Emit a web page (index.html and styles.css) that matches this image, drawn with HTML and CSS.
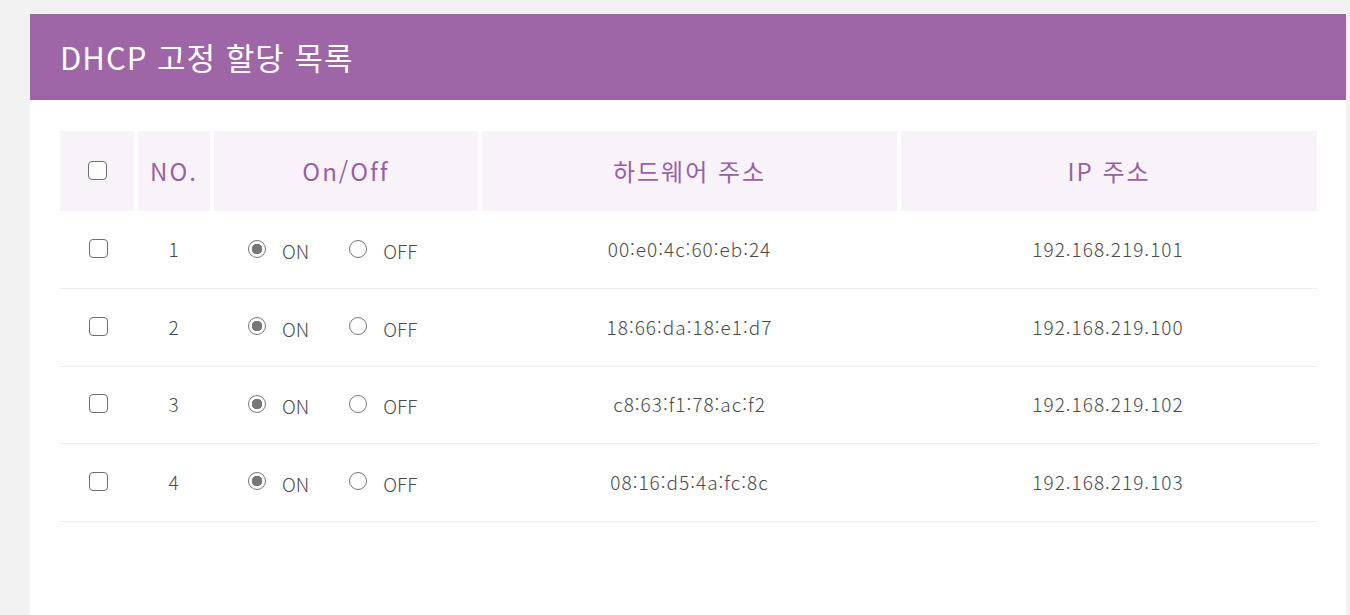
FILE: index.html
```html
<!DOCTYPE html>
<html lang="ko">
<head>
<meta charset="utf-8">
<link rel="stylesheet" href="styles.css">
</head>
<body>
<div class="page">
  <section class="card">
    <header class="card-head"><h1 class="title">DHCP 고정 할당 목록</h1></header>
    <div class="card-body">
      <table class="list">
        <colgroup>
          <col class="c-chk"><col class="c-no"><col class="c-onoff"><col class="c-mac"><col class="c-ip">
        </colgroup>
        <thead>
          <tr>
            <th><input type="checkbox" class="chk"></th>
            <th>NO.</th>
            <th>On/Off</th>
            <th>하드웨어 주소</th>
            <th>IP 주소</th>
          </tr>
        </thead>
        <tbody>
          <tr>
            <td><input type="checkbox" class="chk"></td>
            <td>1</td>
            <td><div class="onoff"><label class="opt"><input type="radio" class="rad" name="r1" checked><span>ON</span></label><label class="opt"><input type="radio" class="rad" name="r1"><span>OFF</span></label></div></td>
            <td>00:e0:4c:60:eb:24</td>
            <td>192.168.219.101</td>
          </tr>
          <tr>
            <td><input type="checkbox" class="chk"></td>
            <td>2</td>
            <td><div class="onoff"><label class="opt"><input type="radio" class="rad" name="r2" checked><span>ON</span></label><label class="opt"><input type="radio" class="rad" name="r2"><span>OFF</span></label></div></td>
            <td>18:66:da:18:e1:d7</td>
            <td>192.168.219.100</td>
          </tr>
          <tr>
            <td><input type="checkbox" class="chk"></td>
            <td>3</td>
            <td><div class="onoff"><label class="opt"><input type="radio" class="rad" name="r3" checked><span>ON</span></label><label class="opt"><input type="radio" class="rad" name="r3"><span>OFF</span></label></div></td>
            <td>c8:63:f1:78:ac:f2</td>
            <td>192.168.219.102</td>
          </tr>
          <tr>
            <td><input type="checkbox" class="chk"></td>
            <td>4</td>
            <td><div class="onoff"><label class="opt"><input type="radio" class="rad" name="r4" checked><span>ON</span></label><label class="opt"><input type="radio" class="rad" name="r4"><span>OFF</span></label></div></td>
            <td>08:16:d5:4a:fc:8c</td>
            <td>192.168.219.103</td>
          </tr>
        </tbody>
      </table>
    </div>
  </section>
</div>
</body>
</html>
```

FILE: styles.css
```css
* { box-sizing: border-box; }
html, body { margin: 0; padding: 0; height: 100%; }
body {
  background: #f2f2f2;
  font-family: "Noto Sans CJK KR", "Noto Sans", sans-serif;
  overflow: hidden;
}
.page {
  padding: 14px 4px 0 30px;
  height: 100%;
}
.card {
  background: #fff;
  min-height: 700px;
}
.card-head {
  background: #9e66a7;
  height: 86px;
  display: flex;
  align-items: center;
  padding-left: 30px;
}
.title {
  margin: 0;
  color: #fff;
  font-weight: 400;
  font-size: 31px;
  letter-spacing: 1px;
  line-height: 1;
  padding-bottom: 2px;
}
.card-body {
  padding: 31px 29px 0 30px;
}
.list {
  width: 1257px;
  border-collapse: collapse;
  table-layout: fixed;
}
.c-chk { width: 76px; }
.c-no { width: 76px; }
.c-onoff { width: 268px; }
.c-mac { width: 419px; }
.c-ip { width: 418px; }
.list th {
  height: 80px;
  background: #f8f3f9;
  color: #9a5fa4;
  font-weight: 400;
  font-size: 24px;
  letter-spacing: 2px;
  text-align: center;
  border-left: 4px solid #fff;
  padding: 0 0 2px;
}
.list th:first-child { border-left: 0; }
.list td {
  height: 77.5px;
  border-bottom: 1px solid #ececec;
  text-align: center;
  color: #4a4a4a;
  font-size: 19px;
  font-weight: 300;
  letter-spacing: 1px;
  padding: 0 0 2px;
}
.chk {
  appearance: none;
  -webkit-appearance: none;
  display: block;
  width: 19px;
  height: 19px;
  margin: 0 auto;
  border: 1.5px solid #6e6e6e;
  border-radius: 4px;
  background: #fff;
}
.onoff {
  display: flex;
  align-items: center;
  padding-left: 36px;
  gap: 40px;
}
.opt {
  display: flex;
  align-items: center;
  gap: 16px;
  letter-spacing: 0;
}
.opt span { position: relative; top: 2px; }
.rad {
  appearance: none;
  -webkit-appearance: none;
  width: 18px;
  height: 18px;
  margin: 0;
  border: 1.5px solid #777;
  border-radius: 50%;
  background: #fff;
}
.rad:checked {
  background: radial-gradient(circle, #777 0 5px, #fff 5.5px);
}
```
